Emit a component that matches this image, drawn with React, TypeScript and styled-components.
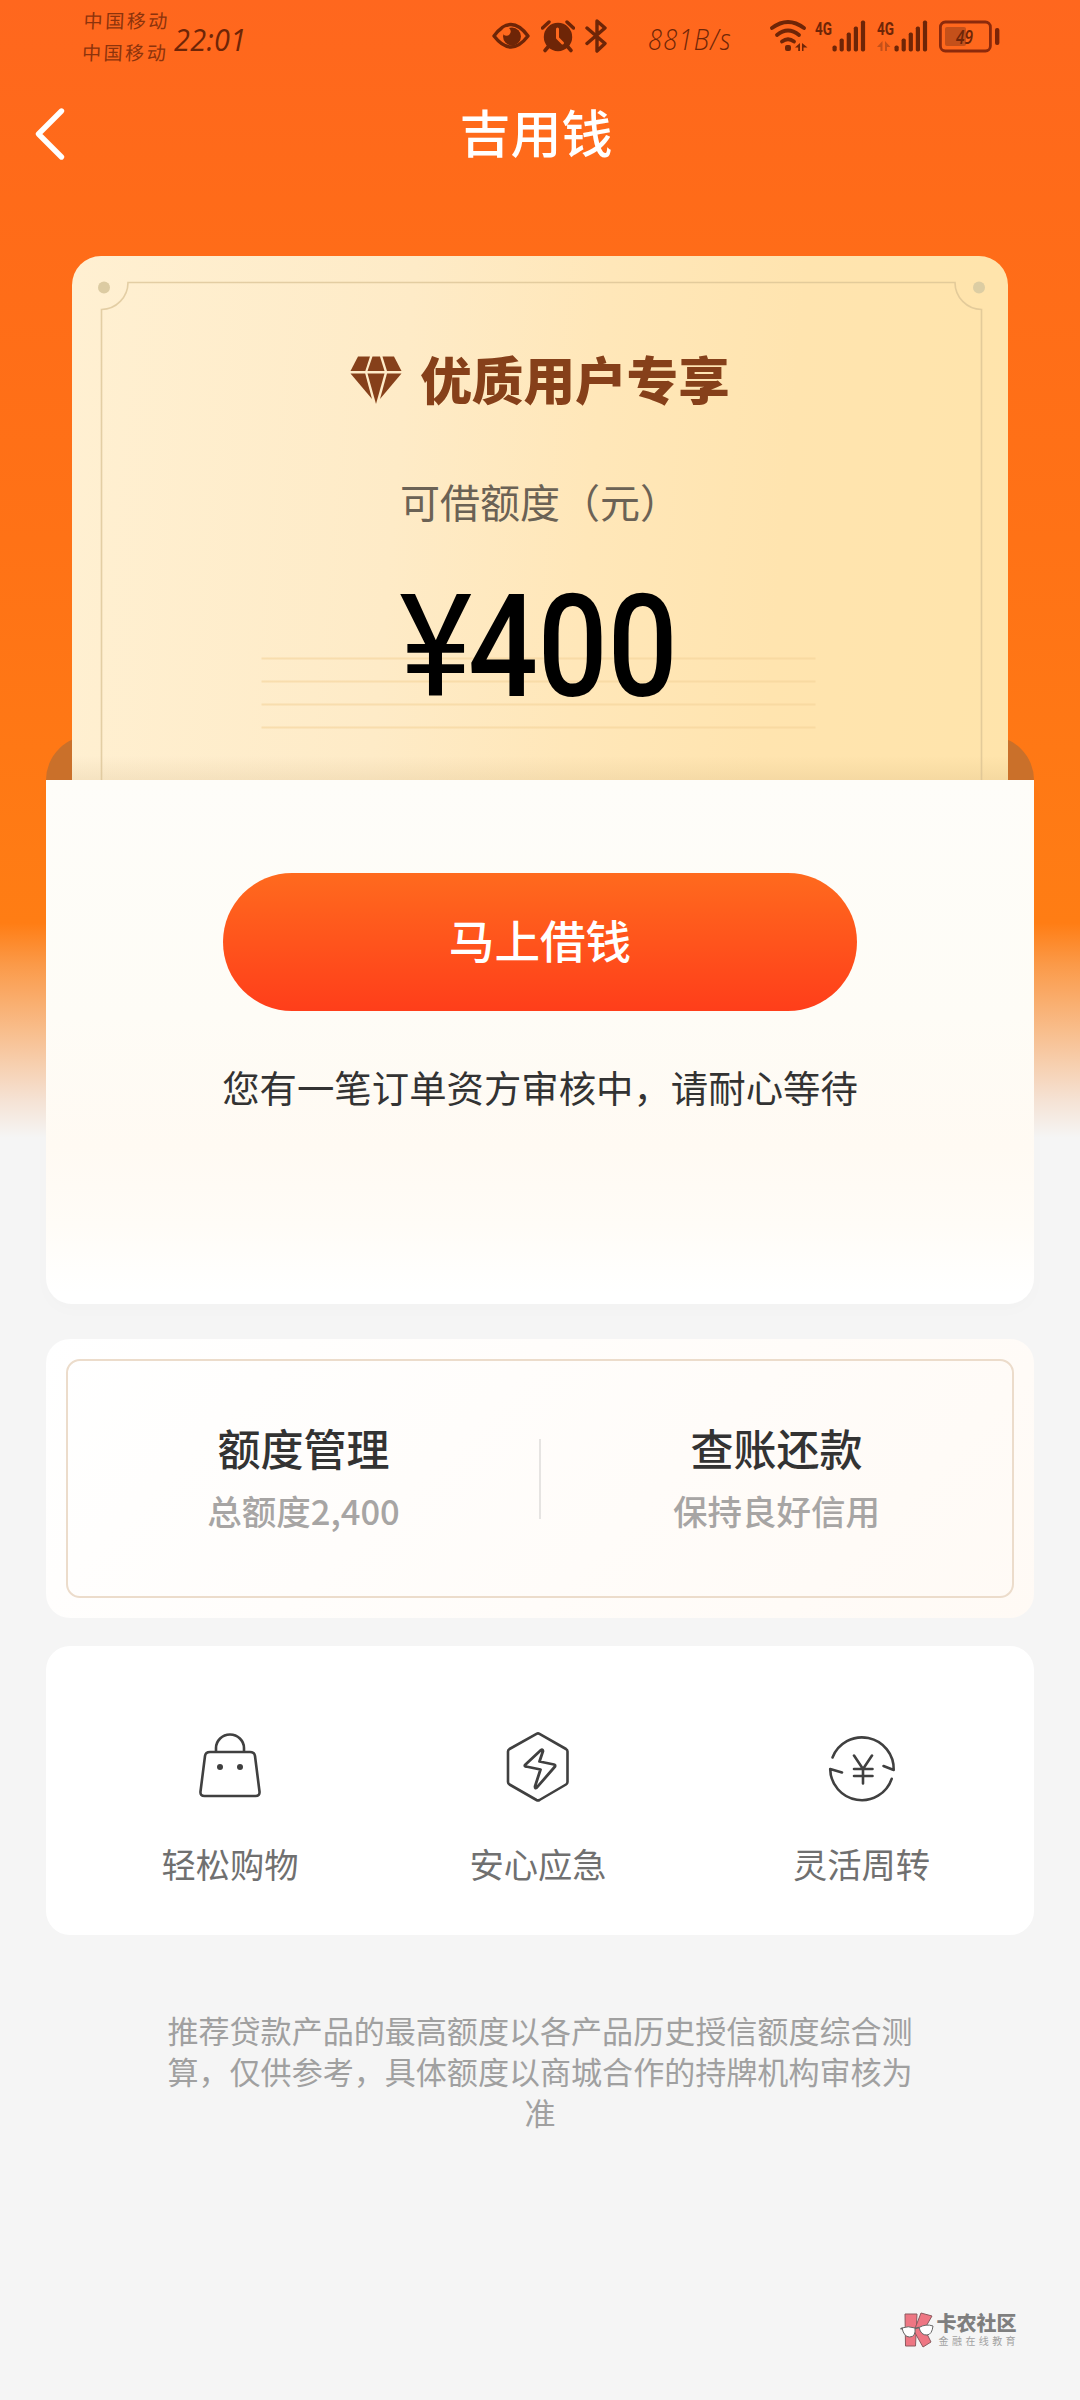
import React from "react";
import styled, { createGlobalStyle } from "styled-components";

const GlobalStyle = createGlobalStyle`
  * { box-sizing: border-box; }
  body {
    margin: 0;
    font-family: "Noto Sans CJK SC", "Noto Sans", sans-serif;
    background: #f5f5f5;
  }
`;

const INK = "#6e2507";
const LINE = "#404040";

const Page = styled.div`
  width: 1080px;
  height: 2400px;
  overflow: hidden;
  display: flex;
  flex-direction: column;
  background: linear-gradient(
    180deg,
    #ff671e 0,
    #ff6b19 200px,
    #ff7216 540px,
    #ff7d14 923px,
    #fb9a49 965px,
    #f8bd8b 1030px,
    #f5e2d4 1100px,
    #f5f5f5 1138px
  );
`;

/* status bar */
const StatusBar = styled.div`
  height: 68px;
  display: flex;
  align-items: flex-start;
  padding-left: 83px;
  color: ${INK};
`;

const Carriers = styled.div`
  width: 91px;
  padding-top: 4px;
  display: flex;
  flex-direction: column;
  font-size: 19px;
  line-height: 32px;
  letter-spacing: 2.6px;
  white-space: nowrap;
  color: #8c330c;
  transform: skewX(-3deg);
`;

const Clock = styled.div`
  width: 74px;
  padding-top: 19px;
  font-family: "Open Sans", sans-serif;
  font-style: italic;
  font-size: 31px;
  line-height: 40px;
  letter-spacing: 0.4px;
  white-space: nowrap;
  transform: scaleX(0.93);
  transform-origin: left;
`;

const Speed = styled.div`
  width: 90px;
  margin-left: 41px;
  padding-top: 19px;
  font-family: "Open Sans", sans-serif;
  font-weight: 300;
  font-style: italic;
  font-size: 29px;
  line-height: 40px;
  letter-spacing: 1.4px;
  white-space: nowrap;
  transform: scaleX(0.88);
  transform-origin: left;
`;

const StatusIcon = styled.svg<{ $gap: number }>`
  flex: none;
  display: block;
  margin-left: ${(p) => p.$gap}px;
  margin-top: 16px;
`;

/* navigation */
const NavBar = styled.header`
  height: 130px;
  display: grid;
  grid-template-columns: 100px 1fr 108px;
  align-items: center;
  color: #fff;
`;

const BackIcon = styled.svg`
  display: block;
  margin-left: 32px;
`;

const NavTitle = styled.h1`
  margin: 0;
  padding-bottom: 5px;
  text-align: center;
  font-size: 51px;
  font-weight: 500;
  line-height: 70px;
`;

/* hero */
const Stage = styled.section`
  margin-top: 58px;
  height: 524px;
  display: grid;
  grid-template-columns: 1fr;
  grid-template-rows: 1fr;
  justify-items: center;
`;

const Slot = styled.div`
  grid-area: 1 / 1;
  align-self: end;
  width: 988px;
  height: 44px;
  border-radius: 44px 44px 0 0;
  background: #ca702a;
`;

const Coupon = styled.div`
  grid-area: 1 / 1;
  position: relative;
  width: 936px;
  height: 524px;
  border-radius: 29px 29px 0 0;
  background: linear-gradient(180deg, rgba(160, 120, 60, 0) 500px, rgba(160, 120, 60, 0.1) 524px),
    linear-gradient(95deg, #fff0d2 0%, #feebc7 35%, #ffe7b9 55%, #ffe4af 75%, #ffe4ab 100%);
  display: flex;
  flex-direction: column;
  align-items: center;
`;

const CouponFrame = styled.svg`
  position: absolute;
  inset: 0;
`;

const Badge = styled.div`
  position: relative;
  height: 80px;
  margin-top: 84px;
  display: flex;
  align-items: center;
  gap: 18px;
  color: #86401a;
`;

const BadgeText = styled.div`
  font-size: 51.6px;
  font-weight: 900;
  line-height: 80px;
  padding-bottom: 5px;
  white-space: nowrap;
`;

const QuotaLabel = styled.div`
  position: relative;
  margin-top: 51px;
  height: 60px;
  font-size: 40px;
  line-height: 60px;
  color: #6b6255;
`;

const Amount = styled.div`
  position: relative;
  margin-top: 46px;
  height: 140px;
  display: flex;
  font-family: Roboto, sans-serif;
  font-weight: 500;
  font-size: 143px;
  line-height: 140px;
  color: #000;
  transform: scaleX(0.86);
  white-space: nowrap;
`;

const Yen = styled.span`
  font-weight: 400;
  transform: scaleX(1.13);
`;

const Panel = styled.section`
  width: 988px;
  height: 524px;
  margin: 0 auto;
  padding-top: 93px;
  border-radius: 0 0 26px 26px;
  background: linear-gradient(180deg, #fefdf9 0%, #fefcf6 45%, #fffaf3 70%, #fffcf7 85%, #ffffff 98%);
  box-shadow: 0 6px 18px rgba(0, 0, 0, 0.015);
  display: flex;
  flex-direction: column;
  align-items: center;
`;

const BorrowButton = styled.button`
  width: 634px;
  height: 138px;
  border: 0;
  border-radius: 69px;
  padding: 0 0 7px;
  background: linear-gradient(180deg, #ff6a1e, #ff3e1a);
  color: #fff;
  font-family: inherit;
  font-size: 45.6px;
  font-weight: 500;
  line-height: 60px;
`;

const Notice = styled.p`
  margin: 46px 0 0;
  font-size: 37.4px;
  line-height: 60px;
  color: #333;
  white-space: nowrap;
`;

/* account shortcuts */
const AccountCard = styled.section`
  width: 988px;
  height: 279px;
  margin: 35px auto 0;
  padding: 20px;
  border-radius: 24px;
  background: linear-gradient(135deg, #ffffff 0%, #fffdfb 40%, #fffaf5 100%);
`;

const AccountFrame = styled.div`
  height: 239px;
  border: 2px solid #ecdccb;
  border-radius: 14px;
  display: grid;
  grid-template-columns: 1fr 2px 1fr;
  align-items: center;
`;

const Rule = styled.div`
  height: 80px;
  background: #e6e4e2;
`;

const Account = styled.div`
  display: flex;
  flex-direction: column;
  align-items: center;
  padding-bottom: 1px;
`;

const AccountName = styled.div`
  font-size: 43px;
  font-weight: 500;
  line-height: 64px;
  color: #333;
`;

const AccountHint = styled.div`
  font-size: 34.5px;
  font-weight: 500;
  line-height: 62px;
  color: #a7a5a4;
`;

/* features */
const FeatureCard = styled.section`
  width: 988px;
  height: 289px;
  margin: 28px auto 0;
  padding: 79px 1px 0 28px;
  border-radius: 24px;
  background: #fff;
  display: grid;
  grid-template-columns: 312px 304px 1fr;
`;

const Feature = styled.div`
  display: flex;
  flex-direction: column;
  align-items: center;
  gap: 28px;
  font-size: 34.3px;
  line-height: 60px;
  color: #707070;
`;

const Disclaimer = styled.p`
  width: 750px;
  margin: 74px auto 0;
  font-size: 31.05px;
  line-height: 41.2px;
  text-align: center;
  color: #a0a0a0;
`;

/* community mark */
const Mark = styled.footer`
  margin: auto 61px 51px auto;
  display: flex;
  align-items: center;
  gap: 2px;
`;

const MarkText = styled.div`
  display: flex;
  flex-direction: column;
`;

const MarkName = styled.div`
  font-size: 20px;
  font-weight: 900;
  line-height: 22px;
  color: #7f7f7f;
`;

const MarkTag = styled.div`
  padding-left: 2px;
  font-size: 10px;
  line-height: 14px;
  letter-spacing: 3.4px;
  color: #a2a2a2;
`;

function EyeIcon() {
  return (
    <StatusIcon $gap={244} width="38" height="40" viewBox="0 0 38 40">
      <path d="M2 20 Q19 -3 36 20 Q19 42 2 20Z" fill="none" stroke={INK} strokeWidth="3.4" strokeLinejoin="round" />
      <circle cx="20" cy="20.500" r="9" fill={INK} />
      <circle cx="14.500" cy="15.500" r="4.200" fill="#ff681d" />
    </StatusIcon>
  );
}

function AlarmIcon() {
  return (
    <StatusIcon $gap={11} width="34" height="40" viewBox="0 0 34 40">
      <circle cx="17" cy="21" r="14.200" fill={INK} />
      <path d="M1.500 12 L8 6 M32.500 12 L26 6" stroke={INK} strokeWidth="3.400" strokeLinecap="round" />
      <path d="M7 31l-3 3.500M27 31l3 3.500" stroke={INK} strokeWidth="3.600" strokeLinecap="round" />
      <path d="M16.500 13v9l5 5" fill="none" stroke="#ff681d" strokeWidth="3" strokeLinecap="round" strokeLinejoin="round" />
    </StatusIcon>
  );
}

function BluetoothIcon() {
  return (
    <StatusIcon $gap={10} width="22" height="40" viewBox="0 0 22 40">
      <path d="M2 12 L20 27.500 L12 35 V5 L20 12 L2 27.500" fill="none" stroke={INK} strokeWidth="3.400" strokeLinejoin="round" strokeLinecap="round" />
    </StatusIcon>
  );
}

function WifiIcon() {
  return (
    <StatusIcon $gap={32} width="38" height="40" viewBox="0 0 38 40">
      <g fill="none" stroke={INK} strokeWidth="3.800" strokeLinecap="round">
        <path d="M2 12 Q18 0 34 12" />
        <path d="M7 19 Q18 10 29 19" />
        <path d="M12 25.500 Q18 21 24 25.500" />
      </g>
      <rect x="15" y="29" width="6" height="6" rx="2" fill={INK} />
      <path d="M30 27v8h-1.800v-3.400h-3.200zM32 27v8h1.500v-3.400h4z" fill={INK} />
    </StatusIcon>
  );
}

function SignalIcon({ gap, faint }: { gap: number; faint?: boolean }) {
  const bars = [6, 13, 19, 25, 31];
  return (
    <StatusIcon $gap={gap} width="51" height="40" viewBox="0 0 51 40">
      <text x="0" y="18.500" fontFamily="Roboto" fontWeight="700" fontSize="18" fill={INK} textLength="17" lengthAdjust="spacingAndGlyphs">
        4G
      </text>
      {faint && <path d="M5.500 25v10h-2v-4h-3.500zM8 25v10h2v-4h3.500z" fill="#c4501a" />}
      {bars.map((h, i) => (
        <rect key={h} x={17.5 + i * 7.1} y={35.5 - h} width="4.200" height={h} rx="1.800" fill={INK} />
      ))}
    </StatusIcon>
  );
}

function BatteryIcon() {
  return (
    <StatusIcon $gap={11} width="62" height="40" viewBox="0 0 62 40">
      <rect x="1.400" y="6" width="50" height="29" rx="5" fill="none" stroke="#8c2a0c" strokeWidth="2.800" />
      <rect x="6" y="11" width="21" height="19" rx="2" fill="#c4501a" />
      <rect x="56" y="12" width="4.400" height="17" rx="2" fill="#7c2408" />
      <text x="17" y="28" fontFamily="Open Sans" fontStyle="italic" fontWeight="600" fontSize="19" fill={INK} textLength="17" lengthAdjust="spacingAndGlyphs">
        49
      </text>
    </StatusIcon>
  );
}

function CouponOrnament() {
  return (
    <CouponFrame width="936" height="524" viewBox="0 0 936 524">
      <path
        d="M29.500 524 V53.500 A27 27 0 0 0 56 26.500 H883 A27 27 0 0 0 909.500 53.500 V524"
        fill="none"
        stroke="#d8c193"
        strokeOpacity="0.72"
        strokeWidth="1.600"
      />
      <circle cx="32" cy="31.500" r="6" fill="#dccba2" />
      <circle cx="907" cy="31.500" r="6" fill="#dccda3" />
      {[402.5, 425.5, 448.5, 471.5].map((y) => (
        <path key={y} d={`M189.500 ${y}H743.500`} stroke="#f3d297" strokeOpacity="0.55" strokeWidth="2" />
      ))}
    </CouponFrame>
  );
}

function Diamond() {
  return (
    <svg width="52" height="50" viewBox="0 0 52 50" fill="currentColor">
      <path d="M8 1.500h12l-4.700 14.500H0.500z" />
      <path d="M22.500 1.500h7.500l4.500 14.500H17.500z" />
      <path d="M32.500 1.500H44L51.500 16H37z" />
      <path d="M0.500 18.500H15.200L22 44z" />
      <path d="M17.500 18.500H34.500L26 49z" />
      <path d="M37 18.500H51.500L30 44z" />
    </svg>
  );
}

function BagIcon() {
  return (
    <svg width="74" height="80" viewBox="0 0 74 80" fill="none" stroke={LINE} strokeWidth="2.600">
      <path d="M23 26.500 V23 a14 13.500 0 0 1 28 0 V26.500" />
      <path d="M17 27 H57 Q61.500 27 62 31 L66.500 66.500 Q67 71 62.500 71 H11.500 Q7 71 7.500 66.500 L12 31 Q12.500 27 17 27Z" />
      <circle cx="27" cy="42" r="3" fill={LINE} stroke="none" />
      <circle cx="47" cy="42" r="3" fill={LINE} stroke="none" />
    </svg>
  );
}

function BoltIcon() {
  return (
    <svg width="74" height="80" viewBox="0 0 74 80" fill="none" stroke={LINE} strokeWidth="2.600" strokeLinejoin="round">
      <path d="M35.500 8.800 Q37 8 38.500 8.800 L65 24 Q66.500 25 66.500 26.500 V57 Q66.500 58.500 65 59.500 L38.500 75 Q37 75.800 35.500 75 L8.500 59.500 Q7 58.500 7 57 V26.500 Q7 25 8.500 24Z" />
      <path d="M40 25 L24 40 Q23.300 41.200 25 41.500 L39.500 44.500 L34 61.500 Q34 64 35.700 62.700 L54 41.500 Q54.500 39.800 53 39.500 L38.500 36.500 L42 26 Q41.500 23.800 40 25Z" strokeWidth="2.800" />
    </svg>
  );
}

function TurnoverIcon() {
  return (
    <svg width="74" height="80" viewBox="0 0 74 80" fill="none" stroke={LINE} strokeWidth="2.600" strokeLinejoin="round" strokeLinecap="round">
      <path d="M7.500 32.500 A31.700 31.700 0 0 1 68.700 45 L58.500 41" />
      <path d="M66.700 53.800 A31.600 31.600 0 0 1 5.200 44 L17 47.500" />
      <path d="M29 30.500 L38 44 L47 30.500 M29 44 H47.500 M29 51 H47.500 M38 44 V58.500" />
    </svg>
  );
}

function CommunityLogo() {
  return (
    <svg width="35" height="38" viewBox="0 0 35 38">
      <g fill="#ee7683" stroke="#8b5a5f" strokeWidth="1">
        <path d="M5 3 L17 3 L15.500 35 L5.500 35 Z" />
        <path d="M21 2 L32 5 L24.500 18 L31 31 L23 36 L14 20 Z" />
      </g>
      <path d="M2 17 Q8 14.500 15 17 Q16 26 9.500 26 Q4 26 2 17Z" fill="#fff" stroke="#666" strokeWidth="1" />
      <path d="M19 16.500 Q26 12.500 33 15 Q32 23.500 27 24 Q21 24.500 19 16.500Z" fill="#fff" stroke="#666" strokeWidth="1" />
      <path d="M0.500 18l2 -1M15 17.500l4 -1" stroke="#666" strokeWidth="1.400" />
    </svg>
  );
}

const features = [
  { label: "轻松购物", Icon: BagIcon },
  { label: "安心应急", Icon: BoltIcon },
  { label: "灵活周转", Icon: TurnoverIcon },
];

export default function App() {
  return (
    <>
      <GlobalStyle />
      <Page>
        <StatusBar>
          <Carriers>
            <span>中国移动</span>
            <span>中国移动</span>
          </Carriers>
          <Clock>22:01</Clock>
          <EyeIcon />
          <AlarmIcon />
          <BluetoothIcon />
          <Speed>881B/s</Speed>
          <WifiIcon />
          <SignalIcon gap={7} />
          <SignalIcon gap={11} faint />
          <BatteryIcon />
        </StatusBar>

        <NavBar>
          <BackIcon width="36" height="56" viewBox="0 0 36 56">
            <path d="M29.500 6 L6.500 29 L29.500 52" fill="none" stroke="#fff" strokeWidth="5.400" strokeLinecap="round" strokeLinejoin="round" />
          </BackIcon>
          <NavTitle>吉用钱</NavTitle>
        </NavBar>

        <Stage>
          <Slot />
          <Coupon>
            <CouponOrnament />
            <Badge>
              <Diamond />
              <BadgeText>优质用户专享</BadgeText>
            </Badge>
            <QuotaLabel>可借额度（元）</QuotaLabel>
            <Amount>
              <Yen>¥</Yen>
              <span>400</span>
            </Amount>
          </Coupon>
        </Stage>

        <Panel>
          <BorrowButton>马上借钱</BorrowButton>
          <Notice>您有一笔订单资方审核中，请耐心等待</Notice>
        </Panel>

        <AccountCard>
          <AccountFrame>
            <Account>
              <AccountName>额度管理</AccountName>
              <AccountHint>总额度2,400</AccountHint>
            </Account>
            <Rule />
            <Account>
              <AccountName>查账还款</AccountName>
              <AccountHint>保持良好信用</AccountHint>
            </Account>
          </AccountFrame>
        </AccountCard>

        <FeatureCard>
          {features.map(({ label, Icon }) => (
            <Feature key={label}>
              <Icon />
              <span>{label}</span>
            </Feature>
          ))}
        </FeatureCard>

        <Disclaimer>推荐贷款产品的最高额度以各产品历史授信额度综合测算，仅供参考，具体额度以商城合作的持牌机构审核为准</Disclaimer>

        <Mark>
          <CommunityLogo />
          <MarkText>
            <MarkName>卡农社区</MarkName>
            <MarkTag>金融在线教育</MarkTag>
          </MarkText>
        </Mark>
      </Page>
    </>
  );
}
